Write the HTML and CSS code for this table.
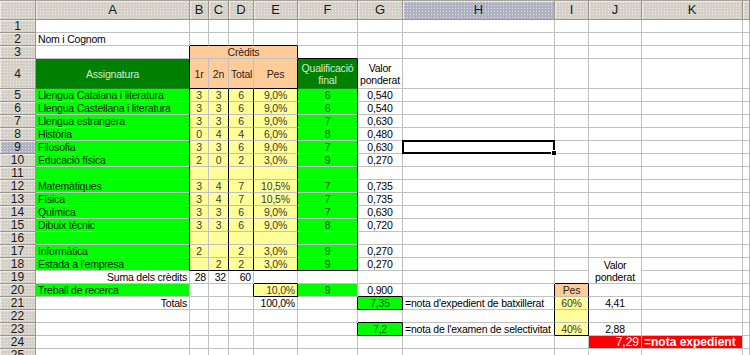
FILE: index.html
```html
<!DOCTYPE html>
<html lang="ca">
<head>
    <meta charset="UTF-8">
    <meta name="viewport" content="width=device-width, initial-scale=1.0">
    <title>Nota expedient</title>
    <link rel="stylesheet" href="styles.css">
</head>
<body>
<table class="sheet">
    <colgroup>
        <col class="c-hdr"><col class="c-a"><col class="c-b"><col class="c-c"><col class="c-d"><col class="c-e"><col class="c-f"><col class="c-g"><col class="c-h"><col class="c-i"><col class="c-j"><col class="c-k"><col class="c-l">
    </colgroup>
    <tr class="cols">
        <th></th><th>A</th><th>B</th><th>C</th><th>D</th><th>E</th><th>F</th><th>G</th><th class="on">H</th><th>I</th><th>J</th><th>K</th><th></th>
    </tr>
    <tr>
        <th>1</th><td></td><td></td><td></td><td></td><td></td><td></td><td></td><td></td><td></td><td></td><td></td><td></td>
    </tr>
    <tr>
        <th>2</th><td>Nom i Cognom</td><td class="bb"></td><td class="bb"></td><td class="bb"></td><td class="bb"></td><td></td><td></td><td></td><td></td><td></td><td></td><td></td>
    </tr>
    <tr>
        <th>3</th><td class="br"></td><td class="p mid br" colspan="4">Crèdits</td><td class="bb"></td><td></td><td></td><td></td><td></td><td></td><td></td>
    </tr>
    <tr class="tall">
        <th>4</th><td class="dk mid br">Assignatura</td><td class="p mid bb">1r</td><td class="p mid bb">2n</td><td class="p mid bb">Total</td><td class="p mid bb br">Pes</td><td class="dk mid br">Qualificació<br>final</td><td class="mid">Valor<br>ponderat</td><td></td><td></td><td></td><td></td><td></td>
    </tr>
    <tr>
        <th>5</th><td class="g br">Llengua Catalana i literatura</td><td class="y mid">3</td><td class="y mid br">3</td><td class="y mid br">6</td><td class="y mid br">9,0%</td><td class="g mid br num">6</td><td class="mid">0,540</td><td></td><td></td><td></td><td></td><td></td>
    </tr>
    <tr>
        <th>6</th><td class="g br">Llengua Castellana i literatura</td><td class="y mid">3</td><td class="y mid br">3</td><td class="y mid br">6</td><td class="y mid br">9,0%</td><td class="g mid br num">6</td><td class="mid">0,540</td><td></td><td></td><td></td><td></td><td></td>
    </tr>
    <tr>
        <th>7</th><td class="g br">Llengua estrangera</td><td class="y mid">3</td><td class="y mid br">3</td><td class="y mid br">6</td><td class="y mid br">9,0%</td><td class="g mid br num">7</td><td class="mid">0,630</td><td></td><td></td><td></td><td></td><td></td>
    </tr>
    <tr>
        <th>8</th><td class="g br">Història</td><td class="y mid">0</td><td class="y mid br">4</td><td class="y mid br">4</td><td class="y mid br">6,0%</td><td class="g mid br num">8</td><td class="mid">0,480</td><td></td><td></td><td></td><td></td><td></td>
    </tr>
    <tr>
        <th class="on">9</th><td class="g br">Filosofia</td><td class="y mid">3</td><td class="y mid br">3</td><td class="y mid br">6</td><td class="y mid br">9,0%</td><td class="g mid br num">7</td><td class="mid">0,630</td><td class="sel"></td><td></td><td></td><td></td><td></td>
    </tr>
    <tr>
        <th>10</th><td class="g br">Educació física</td><td class="y mid">2</td><td class="y mid br">0</td><td class="y mid br">2</td><td class="y mid br">3,0%</td><td class="g mid br num">9</td><td class="mid">0,270</td><td></td><td></td><td></td><td></td><td></td>
    </tr>
    <tr>
        <th>11</th><td class="g br"></td><td class="y"></td><td class="y br"></td><td class="y br"></td><td class="y br"></td><td class="g br"></td><td></td><td></td><td></td><td></td><td></td><td></td>
    </tr>
    <tr>
        <th>12</th><td class="g br">Matemàtiques</td><td class="y mid">3</td><td class="y mid br">4</td><td class="y mid br">7</td><td class="y mid br">10,5%</td><td class="g mid br num">7</td><td class="mid">0,735</td><td></td><td></td><td></td><td></td><td></td>
    </tr>
    <tr>
        <th>13</th><td class="g br">Física</td><td class="y mid">3</td><td class="y mid br">4</td><td class="y mid br">7</td><td class="y mid br">10,5%</td><td class="g mid br num">7</td><td class="mid">0,735</td><td></td><td></td><td></td><td></td><td></td>
    </tr>
    <tr>
        <th>14</th><td class="g br">Química</td><td class="y mid">3</td><td class="y mid br">3</td><td class="y mid br">6</td><td class="y mid br">9,0%</td><td class="g mid br num">7</td><td class="mid">0,630</td><td></td><td></td><td></td><td></td><td></td>
    </tr>
    <tr>
        <th>15</th><td class="g br">Dibuix tècnic</td><td class="y mid">3</td><td class="y mid br">3</td><td class="y mid br">6</td><td class="y mid br">9,0%</td><td class="g mid br num">8</td><td class="mid">0,720</td><td></td><td></td><td></td><td></td><td></td>
    </tr>
    <tr>
        <th>16</th><td class="g br"></td><td class="y"></td><td class="y br"></td><td class="y br"></td><td class="y br"></td><td class="g br"></td><td></td><td></td><td></td><td></td><td></td><td></td>
    </tr>
    <tr>
        <th>17</th><td class="g br">Informàtica</td><td class="y mid">2</td><td class="y br"></td><td class="y mid br">2</td><td class="y mid br">3,0%</td><td class="g mid br num">9</td><td class="mid">0,270</td><td></td><td></td><td></td><td></td><td></td>
    </tr>
    <tr>
        <th>18</th><td class="g br">Estada a l'empresa</td><td class="y bb"></td><td class="y mid br bb">2</td><td class="y mid br bb">2</td><td class="y mid br bb">3,0%</td><td class="g mid br bb num">9</td><td class="mid">0,270</td><td></td><td></td><td class="mid jv two" rowspan="2">Valor<br>ponderat</td><td></td><td></td>
    </tr>
    <tr>
        <th>19</th><td class="r">Suma dels crèdits</td><td class="r">28</td><td class="r">32</td><td class="r">60</td><td class="bb"></td><td></td><td></td><td></td><td class="bb"></td><td></td><td></td>
    </tr>
    <tr>
        <th>20</th><td class="g">Treball de recerca</td><td></td><td></td><td class="br"></td><td class="y r br bb">10,0%</td><td class="g mid num">9</td><td class="mid bb">0,900</td><td class="br"></td><td class="p mid br">Pes</td><td></td><td></td><td></td>
    </tr>
    <tr>
        <th>21</th><td class="r">Totals</td><td></td><td></td><td></td><td class="r">100,0%</td><td class="br"></td><td class="g mid num br bb">7,35</td><td class="br">=nota d'expedient de batxillerat</td><td class="y mid br">60%</td><td class="mid jv">4,41</td><td></td><td></td>
    </tr>
    <tr>
        <th>22</th><td></td><td></td><td></td><td></td><td></td><td></td><td class="bb"></td><td class="br"></td><td class="y br"></td><td></td><td></td><td></td>
    </tr>
    <tr>
        <th>23</th><td></td><td></td><td></td><td></td><td></td><td class="br"></td><td class="g mid num br bb">7,2</td><td class="br">=nota de l'examen de selectivitat</td><td class="y mid br bb">40%</td><td class="mid jv">2,88</td><td></td><td></td>
    </tr>
    <tr>
        <th>24</th><td></td><td></td><td></td><td></td><td></td><td></td><td></td><td></td><td></td><td class="red r">7,29</td><td class="red total">=nota expedient</td><td></td>
    </tr>
    <tr>
        <th>25</th><td></td><td></td><td></td><td></td><td></td><td></td><td></td><td></td><td></td><td></td><td></td><td></td>
    </tr>
</table>
</body>
</html>
```

FILE: styles.css
```css
body {
    margin: 0;
    background: #fff;
    overflow: hidden;
    font-family: "Liberation Sans", Arial, sans-serif;
}

.sheet {
    border-collapse: separate;
    border-spacing: 0;
    table-layout: fixed;
    width: 750px;
    font-size: 10.5px;
    letter-spacing: -0.2px;
    color: #000;
}

.c-hdr { width: 36px; }
.c-a { width: 154px; }
.c-b { width: 19px; }
.c-c { width: 20px; }
.c-d { width: 25px; }
.c-e { width: 44px; }
.c-f { width: 60px; }
.c-g { width: 45px; }
.c-h { width: 152px; }
.c-i { width: 34px; }
.c-j { width: 53px; }
.c-k { width: 101px; }
.c-l { width: 7px; }

.sheet td,
.sheet th {
    box-sizing: border-box;
    height: 13px;
    padding: 0 2px;
    border-right: 1px solid #c0c0c0;
    border-bottom: 1px solid #c0c0c0;
    line-height: 12px;
    vertical-align: bottom;
    white-space: nowrap;
    overflow: hidden;
}

/* grey headers with the dotted windows-classic look */
.sheet th {
    padding: 0;
    font-weight: normal;
    font-size: 12px;
    line-height: 12px;
    letter-spacing: 0;
    color: #1a1a1a;
    text-align: center;
    vertical-align: middle;
    background-color: #d4d0c8;
    background-image: radial-gradient(circle, rgba(255,255,255,0.6) 0.6px, transparent 1px);
    background-size: 3px 3px;
    border-right-color: #9a968e;
    border-bottom-color: #9a968e;
    box-shadow: inset 1px 1px 0 #ece9e2;
}

.cols th {
    height: 20px;
    font-size: 13px;
    line-height: 16px;
    border-top: 1px solid #a8a49c;
}

.sheet th.on {
    background-color: #b0b2c2;
}

.tall td,
.tall th {
    height: 30px;
    line-height: 12px;
}

.mid { text-align: center; }
.r { text-align: right; }

/* fills */
.g {
    background: #00ff00;
    color: #062806;
    border-right-color: #2ee62e;
    border-bottom-color: #2ee62e;
}

.dk {
    background: #008000;
    color: #d6e8d6;
}

.sheet .dk {
    vertical-align: middle;
    border-bottom-color: #1c8a1c;
}

.y {
    background: #ffff99;
    color: #3a3a30;
    border-right-color: #e4e48c;
    border-bottom-color: #e4e48c;
}

.p {
    background: #ffcc99;
    color: #2e2418;
    border-right-color: #e6b88a;
    border-bottom-color: #e6b88a;
}

.tall .mid { vertical-align: middle; }

.num { color: #005a00; }

.red {
    background: #ff0000;
    color: #fff;
    font-size: 12px;
    letter-spacing: 0;
    border-right-color: #ff6a6a;
}

.total { font-weight: bold; }

.jv { padding-right: 11px; }
.sheet .two { vertical-align: middle; }

/* black cell borders */
.sheet .br { border-right-color: #000; }
.sheet .bb { border-bottom-color: #000; }

/* active cell with its fill handle */
.sheet .sel {
    position: relative;
    overflow: visible;
}

.sel::after {
    content: "";
    position: absolute;
    top: -1px;
    left: -1px;
    right: -1px;
    bottom: -1px;
    border: 2px solid #000;
}

.sel::before {
    content: "";
    position: absolute;
    right: -3px;
    bottom: -3px;
    width: 4px;
    height: 4px;
    background: #000;
    border: 1px solid #fff;
    z-index: 1;
}
```
